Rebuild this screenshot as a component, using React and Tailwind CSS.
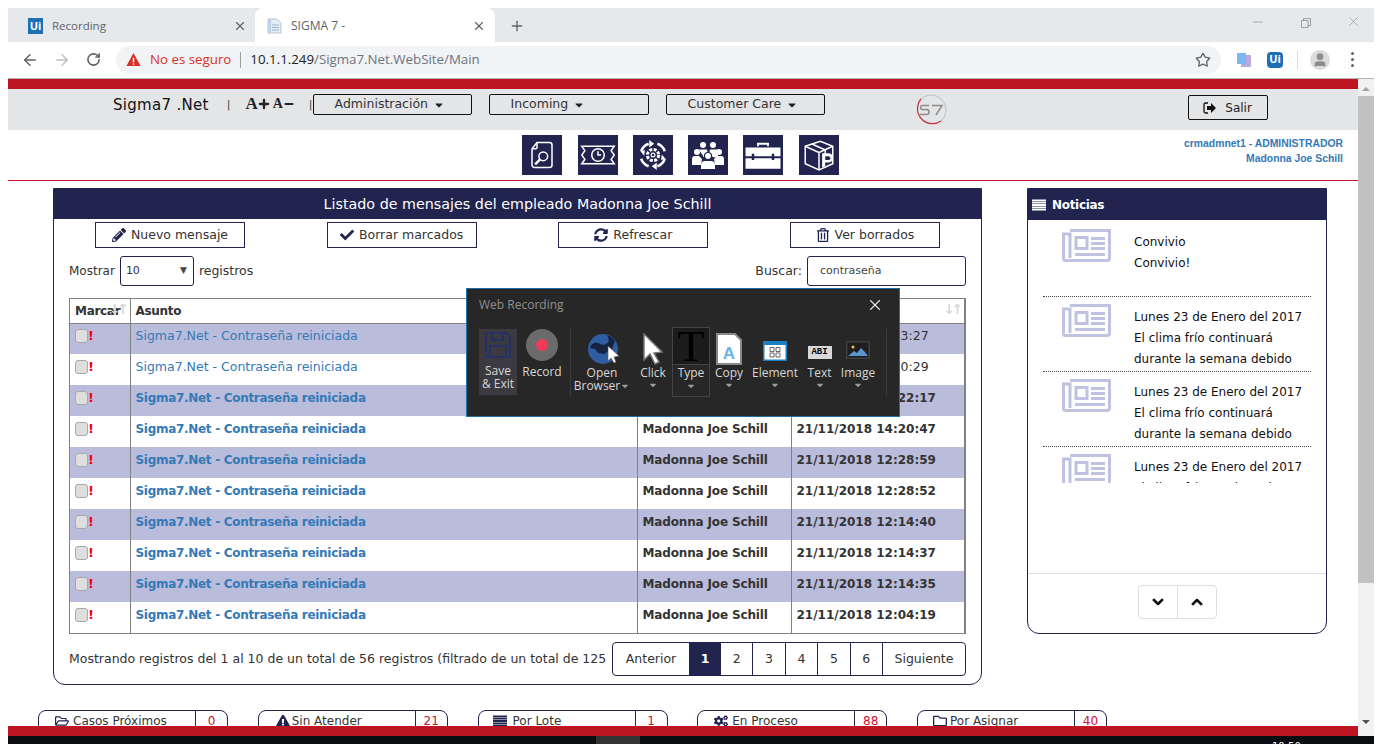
import {
  FaCaretDown,
  FaCheck,
  FaChevronDown,
  FaChevronUp,
  FaCogs,
  FaExclamationTriangle,
  FaPencilAlt,
  FaRegFolder,
  FaRegFolderOpen,
  FaRegTrashAlt,
  FaSyncAlt,
} from 'react-icons/fa';
import { X, Plus, ArrowLeft, ArrowRight, RotateCw, Star, Minus, User } from 'lucide-react';

const PAGE_FONT = 'font-["DejaVu_Sans",sans-serif]';
const TOOL_FONT = 'font-["Open_Sans",sans-serif]';

const ROWS = [
  { date: '21/11/2018 16:53:27', bold: false },
  { date: '21/11/2018 16:50:29', bold: false },
  { date: '21/11/2018 14:22:17', bold: true },
  { date: '21/11/2018 14:20:47', bold: true },
  { date: '21/11/2018 12:28:59', bold: true },
  { date: '21/11/2018 12:28:52', bold: true },
  { date: '21/11/2018 12:14:40', bold: true },
  { date: '21/11/2018 12:14:37', bold: true },
  { date: '21/11/2018 12:14:35', bold: true },
  { date: '21/11/2018 12:04:19', bold: true },
];

const NEWS = [
  ['Convivio', 'Convivio!'],
  ['Lunes 23 de Enero del 2017', 'El clima frío continuará', 'durante la semana debido'],
  ['Lunes 23 de Enero del 2017', 'El clima frío continuará', 'durante la semana debido'],
  ['Lunes 23 de Enero del 2017', 'El clima frío continuará', 'durante la semana debido'],
];

function ListIcon({ className }) {
  return (
    <svg viewBox="0 0 15 12" className={className} fill="currentColor">
      <path d="M0 0h15v2H0zM0 2.500h15v2H0zM0 5h15v2H0zM0 7.500h15v2H0zM0 10h15v2H0z" />
    </svg>
  );
}

const COUNTERS = [
  { label: 'Casos Próximos', count: '0', icon: <FaRegFolderOpen className="h-3.5 w-3.5" />, pad: 'pl-4 gap-1' },
  { label: 'Sin Atender', count: '21', icon: <FaExclamationTriangle className="h-3.5 w-3.5" />, pad: 'pl-[17px] gap-[2px]' },
  { label: 'Por Lote', count: '1', icon: <ListIcon className="h-3 w-3.5" />, pad: 'pl-[14px] gap-[6px]' },
  { label: 'En Proceso', count: '88', icon: <FaCogs className="h-3.5 w-3.5" />, pad: 'pl-4 gap-1' },
  { label: 'Por Asignar', count: '40', icon: <FaRegFolder className="h-3.5 w-3.5" />, pad: 'pl-[15px] gap-[3px]' },
];

function UiLogo({ className }) {
  return (
    <span className={`flex items-center justify-center bg-[#1f6fb5] font-bold text-white ${className}`}>Ui</span>
  );
}

function Chrome() {
  return (
    <div className={`shrink-0 ${TOOL_FONT}`}>
      <div className="flex h-[34px] bg-[#e6e8eb]">
        <div className="flex w-[247px] items-center pl-5 pr-2 pt-0.5">
          <UiLogo className="mr-[9px] h-4 w-[15px] text-[11px]" />
          <span className="flex-1 text-[11.500px] text-[#5f6368]">Recording</span>
          <X className="h-[14px] w-[14px] text-[#5f6368]" strokeWidth={2} />
        </div>
        <div className="flex w-[240px] items-center rounded-t-lg bg-white pl-3 pr-[9px] pt-0.5">
          <svg viewBox="0 0 16 16" className="mr-2 h-4 w-4">
            <path d="M1 1h9l4 4v10H1z" fill="#e4ecf4" stroke="#b7c4d2" />
            <path d="M5 7h7M5 9.500h7M5 12h7" stroke="#9fb2c6" />
            <path d="M1 1h3v14H1z" fill="#bdd3ea" />
          </svg>
          <span className="flex-1 text-xs text-[#5f6368]">SIGMA 7 -</span>
          <X className="h-[14px] w-[14px] text-[#5f6368]" strokeWidth={2} />
        </div>
        <div className="ml-[14px] flex items-center pt-0.5">
          <Plus className="h-4 w-4 text-[#5f6368]" strokeWidth={2} />
        </div>
        <div className="ml-auto flex items-start gap-[35px] pr-[13px] pt-[6px] text-[#8a8d91]">
          <Minus className="h-4 w-4" strokeWidth={1} />
          <svg viewBox="0 0 12 12" className="mt-1 h-[10px] w-[10px]" fill="none" stroke="currentColor">
            <path d="M.5 3h8v8.500h-8zM3 3V.5h8.500V9H8.500" />
          </svg>
          <X className="h-[15px] w-[15px]" strokeWidth={1} />
        </div>
      </div>
      <div className="flex h-[37px] items-center border-b border-[#b5b5b5] bg-white pb-px">
        <ArrowLeft className="ml-[13px] h-[18px] w-[18px] text-[#5f6368]" strokeWidth={2} />
        <ArrowRight className="ml-[14px] h-[18px] w-[18px] text-[#bdbfc2]" strokeWidth={2} />
        <RotateCw className="ml-[15px] h-[15px] w-[15px] text-[#5f6368]" strokeWidth={2.500} />
        <div className="ml-[15px] flex h-7 w-[1105px] items-center rounded-full bg-[#f1f3f4] pl-2.5 pr-2.5 text-[13.300px]">
          <svg viewBox="0 0 16 16" className="mr-[9px] h-[15px] w-[15px]">
            <path d="M8 1l7.500 14H.5z" fill="#d93025" />
            <path d="M7.200 6h1.600v5H7.200zM7.200 12h1.600v1.500H7.200z" fill="#fff" />
          </svg>
          <span className="text-[#d93025]">No es seguro</span>
          <span className="mx-[9px] h-4 w-px bg-[#9aa0a6]" />
          <span className="text-[#202124]">10.1.1.249</span>
          <span className="text-[#6b7480]">/Sigma7.Net.WebSite/Main</span>
          <Star className="ml-auto h-4 w-4 text-[#5f6368]" strokeWidth={2} />
        </div>
        <svg viewBox="0 0 16 16" className="ml-[15px] h-4 w-4">
          <rect x="5" y="3" width="10" height="12" fill="#b9a9dc" />
          <rect x="1" y="1" width="9" height="11" fill="#7db7f0" />
        </svg>
        <UiLogo className="ml-[15px] h-4 w-4 rounded-sm text-[11px]" />
        <span className="ml-[14px] h-[18px] w-px bg-[#dadce0]" />
        <span className="ml-3 flex h-5 w-5 items-center justify-center rounded-full bg-[#dcdcdc]">
          <User className="h-4 w-4 fill-[#8d8d8d] text-[#8d8d8d]" />
        </span>
        <span className="ml-[21px] flex flex-col gap-[3px]">
          <span className="h-[3px] w-[3px] rounded-full bg-[#5f6368]" />
          <span className="h-[3px] w-[3px] rounded-full bg-[#5f6368]" />
          <span className="h-[3px] w-[3px] rounded-full bg-[#5f6368]" />
        </span>
      </div>
    </div>
  );
}

function MenuButton({ label, className }) {
  return (
    <button
      type="button"
      className={`flex h-[21px] items-center justify-start gap-[6px] rounded-[2px] border border-[#111] pl-[21px] text-[12.500px] text-[#333] ${className}`}
    >
      {label}
      <FaCaretDown className="h-3 w-2.5 text-[#222]" />
    </button>
  );
}

function S7Logo() {
  return (
    <svg viewBox="0 0 32 32" className="h-8 w-8">
      <path d="M27 6A15 15 0 0 0 6 5" fill="none" stroke="#c9c9c9" strokeWidth="1.200" />
      <path d="M6 5A15 15 0 0 0 26 27" fill="none" stroke="#c8323a" strokeWidth="1.200" />
      <path d="M26 27A15 15 0 0 0 27 6" fill="none" stroke="#c9c9c9" strokeWidth="1.200" />
      <path
        d="M14 11.500H7.500a2 2 0 0 0-2 2 2 2 0 0 0 2 2h4a2.500 2.500 0 0 1 0 5H4.500M17 11.500h10l-6 9.500"
        fill="none"
        stroke="#8c8c8c"
        strokeWidth="1.500"
      />
    </svg>
  );
}

function Header() {
  return (
    <div className="flex h-[41px] shrink-0 items-start bg-[#e4e5e7] text-black">
      <span className="ml-[105px] mt-[5px] text-[15px] tracking-[0.3px] text-[#111]">Sigma7 .Net</span>
      <span className="ml-[18px] mt-2 text-[11px] text-[#444]">|</span>
      <span className='ml-[15px] mt-[5px] flex items-center font-["Liberation_Serif",serif] font-bold text-[#222]'>
        <span className="text-[17px] leading-5">A</span>
        <Plus className="h-3.5 w-3.5 -ml-px" strokeWidth={4} />
        <span className="ml-0.5 text-[14px] leading-5">A</span>
        <Minus className="h-3 w-3" strokeWidth={4} />
      </span>
      <span className="ml-3.5 mt-2 text-[11px] text-[#444]">|</span>
      <MenuButton label="Administración" className="mt-[5px] w-[159px]" />
      <MenuButton label="Incoming" className="ml-[17px] mt-[5px] w-[160px]" />
      <MenuButton label="Customer Care" className="ml-[17px] mt-[5px] w-[159px]" />
      <div className="ml-[90px] mt-[5px]">
        <S7Logo />
      </div>
      <button
        type="button"
        className="ml-[241px] mt-1.5 flex h-[25px] w-20 items-center justify-center gap-2 rounded-[2px] border border-[#111] text-xs text-[#222]"
      >
        <svg viewBox="0 0 14 12" className="h-3 w-3.5" fill="#111">
          <path d="M5 1H2.500A1.500 1.500 0 0 0 1 2.500v7A1.500 1.500 0 0 0 2.500 11H5" fill="none" stroke="#111" strokeWidth="1.300" />
          <path d="M4 4h4V1l5 5-5 5V8H4z" />
        </svg>
        Salir
      </button>
    </div>
  );
}

function ShortcutIcon({ children }) {
  return (
    <div className="h-10 w-10 bg-[#20244f]">
      <svg viewBox="0 0 32 32" className="h-10 w-10" fill="none" stroke="#fff" strokeWidth="1.200">
        {children}
      </svg>
    </div>
  );
}

function Shortcuts() {
  return (
    <div className="relative flex h-[51px] shrink-0 items-start border-b border-[#c8102e] bg-white">
      <div className="ml-[514px] mt-[5px] flex">
        <ShortcutIcon>
          <path d="M12 6h10a2 2 0 0 1 2 2v16a2 2 0 0 1-2 2H10a2 2 0 0 1-2-2V11z" />
          <path d="M12 6v4a1 1 0 0 1-1 1H8" />
          <circle cx="17" cy="17" r="3.500" />
          <path d="M14.500 19.500L10.500 23.500" strokeWidth="2" />
        </ShortcutIcon>
        <div className="ml-4">
          <ShortcutIcon>
            <path d="M3 9h26l-2.500 3.500L29 16l-2.500 3.500L29 23H3l2.500-3.500L3 16l2.500-3.500z" />
            <circle cx="16" cy="16" r="5" />
            <path d="M16 13v3h2.500" />
          </ShortcutIcon>
        </div>
        <div className="ml-[15px]">
          <ShortcutIcon>
            <circle cx="16" cy="16" r="4.500" strokeWidth="2.400" strokeDasharray="2.400 1.130" />
            <circle cx="16" cy="16" r="1.500" strokeWidth="1" />
            <path d="M6.500 13a10 10 0 0 1 6-6M25.500 13a10 10 0 0 0-6-6M25.500 19a10 10 0 0 1-6 6M6.500 19a10 10 0 0 0 6 6" strokeWidth="2" />
            <path d="M17 7l-4-3v6zM26 19l-3.500 1 .5-4.500zM15 25l4-3v6zM6 13l3.500-1-.5 4.500z" fill="#fff" stroke="none" />
          </ShortcutIcon>
        </div>
        <div className="ml-[15px]">
          <ShortcutIcon>
            <g transform="translate(3.200 3.200) scale(.8)" fill="#fff" stroke="none">
              <circle cx="11" cy="6" r="3" />
              <circle cx="21" cy="6" r="3" />
              <circle cx="5" cy="13" r="3" />
              <circle cx="27" cy="13" r="3" />
              <path d="M7 10.500h8l1 5-4 3zM17 15.500l1-5h7l1 7-4 1z" />
              <path d="M0 26v-6a3 3 0 0 1 3-3h4l3 3-1 6zM23 26l-1-6 3-3h4a3 3 0 0 1 3 3v6z" />
              <path d="M9 30v-4a4 4 0 0 1 4-4h6a4 4 0 0 1 4 4v4z" />
              <circle cx="16" cy="17" r="3.500" stroke="#20244f" />
            </g>
          </ShortcutIcon>
        </div>
        <div className="ml-[15px]">
          <ShortcutIcon>
            <path d="M12 9V7h8v2" strokeWidth="1.500" />
            <path d="M2 10h28v7H2zM2 18.500h28V27H2z" fill="#fff" stroke="none" />
            <path d="M8 15v5M24 15v5" stroke="#20244f" strokeWidth="2" />
          </ShortcutIcon>
        </div>
        <div className="ml-4">
          <ShortcutIcon>
            <path d="M5 9l12-4 10 4v14l-11 5-11-5z" />
            <path d="M5 9l11 5v14M16 14l11-5M10 7l11 5v4" />
            <path d="M18.500 26V14.500h5a3.500 3.500 0 0 1 0 7.500h-2.500v3z" fill="#fff" stroke="none" />
            <path d="M21 20v-3h2.500a1.500 1.500 0 0 1 0 3z" fill="#20244f" stroke="none" />
          </ShortcutIcon>
        </div>
      </div>
      <div className='absolute right-[15px] top-[6px] text-right font-["Liberation_Sans",sans-serif] text-[10.400px] font-bold leading-[15px] text-[#337ab7]'>
        <div>crmadmnet1 - ADMINISTRADOR</div>
        <div>Madonna Joe Schill</div>
      </div>
    </div>
  );
}

function ActionButton({ icon, label }) {
  return (
    <button
      type="button"
      className="flex h-[26px] w-[150px] items-center justify-center gap-[5px] border border-[#20244f] text-[12.500px] text-[#333]"
    >
      {icon}
      {label}
    </button>
  );
}

function SortArrows() {
  return (
    <span className="absolute right-[1px] top-0.5 flex text-[14px] font-bold leading-4 text-[#d8d8d8]">
      <span>↓</span>
      <span className="-ml-[3px]">↑</span>
    </span>
  );
}

function MessageRow({ row, index }) {
  const shade = index % 2 === 0 ? 'bg-[#babcdc]' : 'bg-white';
  return (
    <tr className={`h-[31px] ${shade}`}>
      <td className="border-r border-[#808080] pb-[6px] pl-[5px] align-middle">
        <span className="flex items-center">
          <span className="h-[14px] w-[13px] rounded-[3px] border border-[#a9a9a9] bg-[#dedede]" />
          <span className="text-[13px] font-bold leading-4 text-[#ff0000]">!</span>
        </span>
      </td>
      <td
        className={`border-r border-[#808080] pb-[5px] pl-[5px] text-[#337ab7] ${row.bold ? 'text-xs font-bold tracking-[-0.3px]' : ''}`}
      >
        Sigma7.Net - Contraseña reiniciada
      </td>
      <td
        className={`border-r border-[#808080] pb-[5px] pl-[5px] text-[#333] ${row.bold ? 'text-xs font-bold tracking-[-0.15px]' : ''}`}
      >
        Madonna Joe Schill
      </td>
      <td className={`pb-[5px] pl-[5px] text-[#333] ${row.bold ? 'text-xs font-bold' : ''}`}>{row.date}</td>
    </tr>
  );
}

function MessagesPanel() {
  return (
    <div className="h-[497px] w-[929px] shrink-0 rounded-b-xl border border-[#20244f]">
      <div className="flex h-[30px] items-center justify-center bg-[#20244f] pt-0.5 text-[14.300px] font-medium text-white">
        Listado de mensajes del empleado Madonna Joe Schill
      </div>
      <div className="mt-[3px] flex justify-between pl-[41px] pr-[41px]">
        <ActionButton icon={<FaPencilAlt className="h-3.5 w-3.5 text-[#20244f]" />} label="Nuevo mensaje" />
        <ActionButton icon={<FaCheck className="h-3.5 w-3.5 text-[#20244f]" />} label="Borrar marcados" />
        <ActionButton icon={<FaSyncAlt className="h-3.5 w-3.5 text-[#20244f]" />} label="Refrescar" />
        <ActionButton icon={<FaRegTrashAlt className="h-3.5 w-3.5 text-[#20244f]" />} label="Ver borrados" />
      </div>
      <div className="mt-2 flex h-[30px] items-center pl-[15px] pr-[15px] text-[12.500px] text-[#333]">
        <span className="text-xs">Mostrar</span>
        <span className="ml-[5px] flex h-[30px] w-[74px] items-center justify-between rounded-[3px] border border-[#20244f] pl-[5px] pr-1.5 text-[11px]">
          10
          <span className="text-[9px] text-[#444]">▼</span>
        </span>
        <span className="ml-[5px]">registros</span>
        <span className="ml-auto">Buscar:</span>
        <span className="ml-[5px] flex h-[30px] w-[159px] items-center rounded-[3px] border border-[#20244f] pl-3 text-[11px] text-[#444]">
          contraseña
        </span>
      </div>
      <div className="ml-[15px] mt-3 w-[897px] border border-r-2 border-[#808080]">
        <table className="w-full table-fixed border-collapse text-[12.500px]">
          <colgroup>
            <col className="w-[60px]" />
            <col className="w-[507px]" />
            <col className="w-[154px]" />
            <col />
          </colgroup>
          <thead>
            <tr className="h-6 border-b border-[#808080] text-left text-xs tracking-[-0.3px] text-[#333]">
              <th className="relative border-r border-[#808080] pl-[5px] font-bold">
                Marcar
                <SortArrows />
              </th>
              <th className="border-r border-[#808080] pl-[5px] font-bold">Asunto</th>
              <th className="border-r border-[#808080] pl-[5px] font-bold">Empleado</th>
              <th className="relative pl-[5px] font-bold">
                Fecha
                <SortArrows />
              </th>
            </tr>
          </thead>
          <tbody>
            {ROWS.map((row, i) => (
              <MessageRow key={row.date} row={row} index={i} />
            ))}
          </tbody>
        </table>
      </div>
      <div className="ml-[15px] mt-2 flex w-[897px] items-center text-[12.500px] text-[#333]">
        <span className="w-[543px] shrink-0 overflow-hidden whitespace-nowrap">
          Mostrando registros del 1 al 10 de un total de 56 registros (filtrado de un total de 125
        </span>
        <div className="flex h-[34px] flex-1 overflow-hidden rounded border border-[#20244f]">
          <span className="flex w-[76px] items-center justify-center">Anterior</span>
          <span className="flex w-8 items-center justify-center bg-[#20244f] font-bold text-white">1</span>
          {['2', '3', '4', '5', '6'].map((n) => (
            <span key={n} className="flex w-[32.400px] items-center justify-center border-r border-[#20244f]">
              {n}
            </span>
          ))}
          <span className="flex flex-1 items-center justify-center">Siguiente</span>
        </div>
      </div>
    </div>
  );
}

function NewsIcon() {
  return (
    <svg viewBox="0 0 49 33" className="ml-[19px] mt-[7px] h-[33px] w-[49px] shrink-0" fill="none" stroke="#bfc2e0" strokeWidth="3">
      <path d="M8 1.500h39.500V29a2.500 2.500 0 0 1-2.500 2.500H3.500A2 2 0 0 1 1.500 29.500V5H8v24" />
      <path d="M14 8.500h11v11H14z" />
      <path d="M29 9.500h14M29 14.500h14M29 19.500h14M13 25.500h30" />
    </svg>
  );
}

function NewsPanel() {
  return (
    <div className="ml-[45px] flex h-[446px] w-[300px] shrink-0 flex-col rounded-b-xl border border-[#20244f]">
      <div className="flex h-[31px] shrink-0 items-center gap-[6px] bg-[#20244f] pl-1 text-xs font-bold tracking-[-0.3px] text-white">
        <ListIcon className="h-3 w-[14px]" />
        Noticias
      </div>
      <div className="h-[263px] shrink-0 overflow-hidden px-[15px] pt-0.5">
        {NEWS.map((lines, i) => (
          <div key={i} className="flex h-[75px] border-b border-dotted border-[#444]">
            <NewsIcon />
            <div className="ml-[23px] pt-[10px] text-xs leading-[21px] text-[#111]">
              {lines.map((line) => (
                <div key={line} className="whitespace-nowrap">
                  {line}
                </div>
              ))}
            </div>
          </div>
        ))}
      </div>
      <div className="mt-[90px] flex flex-1 justify-center border-t border-[#ddd] pt-[11px]">
        <div className="flex h-[34px] w-[79px] rounded border border-[#ddd]">
          <span className="flex flex-1 items-center justify-center border-r border-[#ddd]">
            <FaChevronDown className="h-3 w-3 text-black" stroke="currentColor" strokeWidth={40} />
          </span>
          <span className="flex flex-1 items-center justify-center">
            <FaChevronUp className="h-3 w-3 text-black" stroke="currentColor" strokeWidth={40} />
          </span>
        </div>
      </div>
    </div>
  );
}

function Counters() {
  return (
    <div className="ml-[30px] mt-[25px] flex shrink-0 gap-[29.750px]">
      {COUNTERS.map((c) => (
        <div key={c.label} className="flex h-8 w-[190px] rounded-t-lg border border-[#20244f] text-xs text-[#333]">
          <span className={`flex h-5 flex-1 items-center ${c.pad}`}>
            <span className="text-[#20244f]">{c.icon}</span>
            {c.label}
          </span>
          <span className="flex h-5 w-8 items-center justify-center border-l border-[#20244f] text-[#c8102e]">
            {c.count}
          </span>
        </div>
      ))}
    </div>
  );
}

function ToolItem({ label, label2, w, children }) {
  return (
    <div className={`flex h-[70px] flex-col items-center ${w}`}>
      <div className="flex h-[36px] items-end justify-center">{children}</div>
      <div className="mt-[1px] text-center text-xs leading-[13px] text-[#d8d8d8]">
        <div>{label}</div>
        {label2 && (
          <div className="flex items-center">
            {label2}
            <FaCaretDown className="h-2.5 w-2.5 text-[#9a9a9a]" />
          </div>
        )}
      </div>
      {!label2 && <FaCaretDown className="mt-[1px] h-2.5 w-2.5 text-[#9a9a9a]" />}
    </div>
  );
}

function RecorderOverlay() {
  return (
    <div className={`absolute left-[466px] top-[288px] h-[129px] w-[434px] border border-[#1d6fa5] bg-[#272727] ${TOOL_FONT}`}>
      <div className="flex h-[32px] items-center justify-between pl-3 pr-[15px] text-xs text-[#8f8f8f]">
        Web Recording
        <X className="h-[18px] w-[18px] text-[#e8e8e8]" strokeWidth={1.500} />
      </div>
      <div className="ml-3 mt-[8px] flex items-start">
        <div className="flex h-[66px] w-[38px] flex-col items-center bg-[#3a3a40] pt-[3px]">
          <svg viewBox="0 0 26 26" className="h-[26px] w-[26px]" fill="none" stroke="#23306e" strokeWidth="1.500">
            <path d="M1 1h20l4 4v20H1z" />
            <path d="M7 1v7h11V1M5 25V14h16v11" />
          </svg>
          <div className="mt-[6px] text-center text-xs leading-[13px] text-[#d8d8d8]">
            <div>Save</div>
            <div>&amp; Exit</div>
          </div>
        </div>
        <div className="flex w-[48px] flex-col items-center pl-0.5">
          <span className="flex h-8 w-8 items-center justify-center rounded-full bg-[#6b6b6b]">
            <span className="h-3 w-3 rounded-full bg-[#ef3b55]" />
          </span>
          <span className="mt-[3px] text-xs text-[#d8d8d8]">Record</span>
        </div>
        <div className="ml-[5px] h-[67px] w-px bg-[#3c3c3c]" />
        <ToolItem label="Open" label2="Browser" w="w-[62px]">
          <svg viewBox="0 0 34 32" className="ml-1.5 h-8 w-[34px]">
            <circle cx="15" cy="16" r="15" fill="#2f5da0" />
            <path d="M2 15c1-5 5-6 8-5s4 3 8 1 3-5 1-9c3 1 6 3 8 6l-3 8-8 5-6-1-3-4z" fill="#14233f" />
            <path d="M20 13l11 10-5 1 2 5-2 1-3-5-3 3z" fill="#fff" stroke="#555" strokeWidth=".6" />
          </svg>
        </ToolItem>
        <div className="ml-0.5">
          <ToolItem label="Click" w="w-[36px]">
            <svg viewBox="0 0 24 32" className="h-8 w-6">
              <path d="M3 1l18 18-8 1 5 9-4 2-5-10-6 6z" fill="#fff" stroke="#777" strokeWidth="1.500" />
            </svg>
          </ToolItem>
        </div>
        <div className="-mt-[2px] ml-[1px]">
          <div className="flex h-[70px] w-[38px] flex-col items-center border border-[#444] text-xs text-[#d8d8d8]">
            <span className='h-[37px] w-full border-b border-[#444] bg-[#1c1c1c] text-center font-["Liberation_Serif",serif] text-[44px] leading-[38px] text-black'>
              T
            </span>
            <span className="leading-[16px]">Type</span>
            <FaCaretDown className="h-2.5 w-2.5 text-[#9a9a9a]" />
          </div>
        </div>
        <ToolItem label="Copy" w="w-[38px]">
          <svg viewBox="0 0 26 32" className="h-8 w-[26px]">
            <path d="M1 1h18l6 6v24H1z" fill="#fff" stroke="#888" strokeWidth="2" />
            <text x="13" y="26" textAnchor="middle" fontSize="17" fontWeight="700" fontFamily="Liberation Sans, sans-serif" fill="#6db5e8">
              A
            </text>
          </svg>
        </ToolItem>
        <ToolItem label="Element" w="w-[54px]">
          <svg viewBox="0 0 24 20" className="mb-1 h-5 w-6">
            <rect width="24" height="20" fill="#1d7dc2" />
            <rect x="1.500" y="4" width="21" height="14.500" fill="#fff" />
            <path d="M7 6.500h4v4H7zM13 6.500h4v4h-4zM7 12h4v4H7zM13 12h4v4h-4z" fill="none" stroke="#666" />
          </svg>
        </ToolItem>
        <ToolItem label="Text" w="w-[35px]">
          <span className="mb-[6px] flex h-[13px] w-6 items-center justify-center bg-[#d8d8d8] font-mono text-[9px] font-bold leading-none text-black">
            ABI
          </span>
        </ToolItem>
        <ToolItem label="Image" w="w-[42px]">
          <svg viewBox="0 0 24 18" className="mb-1.5 h-[18px] w-6">
            <rect width="24" height="18" fill="#3f3f3f" />
            <rect x="1.500" y="1.500" width="21" height="15" fill="#1f1f1f" />
            <circle cx="7" cy="6" r="1.500" fill="#f2c14e" />
            <path d="M2 15l6-5 3 2 4-5 3 3 4 5z" fill="#5b93d3" />
          </svg>
        </ToolItem>
        <div className="ml-[7px] h-[67px] w-px bg-[#3c3c3c]" />
      </div>
    </div>
  );
}

function Scrollbar() {
  return (
    <div className="flex w-4 shrink-0 flex-col items-center bg-[#f1f1f1] pt-[8px]">
      <span className="h-0 w-0 border-x-4 border-b-4 border-x-transparent border-b-[#a3a3a3]" />
      <span className="mt-[5px] h-[487px] w-full bg-[#c1c1c1]" />
      <span className="mt-[137px] h-0 w-0 border-x-4 border-t-4 border-x-transparent border-t-[#505050]" />
    </div>
  );
}

export default function App() {
  return (
    <div className={`relative flex h-[744px] w-[1382px] flex-col overflow-hidden bg-white pl-2 pr-2 pt-2 ${PAGE_FONT}`}>
      <Chrome />
      <div className="flex h-[657px] shrink-0">
        <div className="flex min-w-0 flex-1 flex-col">
          <div className="h-[10px] shrink-0 bg-[#bd1622]" />
          <div className="flex-1 overflow-hidden">
            <Header />
            <Shortcuts />
            <div className="ml-[45px] mt-[7px] flex items-start">
              <MessagesPanel />
              <NewsPanel />
            </div>
            <Counters />
          </div>
          <div className="h-[10px] shrink-0 bg-[#bd1622]" />
        </div>
        <Scrollbar />
      </div>
      <div className="flex h-2 shrink-0 overflow-hidden bg-[#0b0d10]">
        <span className="ml-[588px] h-full w-11 bg-[#333]" />
        <span className="ml-[632px] pt-[5px] text-[10px] leading-3 text-white">10:50</span>
      </div>
      <RecorderOverlay />
    </div>
  );
}
